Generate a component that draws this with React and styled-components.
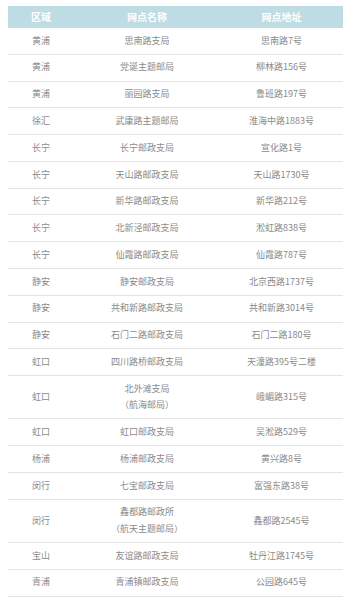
import React from 'react'
import styled, { createGlobalStyle } from 'styled-components'

const rows = [
    ['黄浦', ['思南路支局'], '思南路7号'],
    ['黄浦', ['党诞主题邮局'], '柳林路156号'],
    ['黄浦', ['丽园路支局'], '鲁班路197号'],
    ['徐汇', ['武康路主题邮局'], '淮海中路1883号'],
    ['长宁', ['长宁邮政支局'], '宣化路1号'],
    ['长宁', ['天山路邮政支局'], '天山路1730号'],
    ['长宁', ['新华路邮政支局'], '新华路212号'],
    ['长宁', ['北新泾邮政支局'], '淞虹路838号'],
    ['长宁', ['仙霞路邮政支局'], '仙霞路787号'],
    ['静安', ['静安邮政支局'], '北京西路1737号'],
    ['静安', ['共和新路邮政支局'], '共和新路3014号'],
    ['静安', ['石门二路邮政支局'], '石门二路180号'],
    ['虹口', ['四川路桥邮政支局'], '天潼路395号二楼'],
    ['虹口', ['北外滩支局', '（航海邮局）'], '峨嵋路315号'],
    ['虹口', ['虹口邮政支局'], '吴淞路529号'],
    ['杨浦', ['杨浦邮政支局'], '黄兴路8号'],
    ['闵行', ['七宝邮政支局'], '富强东路38号'],
    ['闵行', ['鑫都路邮政所', '（航天主题邮局）'], '鑫都路2545号'],
    ['宝山', ['友谊路邮政支局'], '牡丹江路1745号'],
    ['青浦', ['青浦镇邮政支局'], '公园路645号'],
]

const App = () => {
    return (
        <>
            <GlobalStyle />
            <Page>
                <Table>
                    <HeadRow>
                        <HeadCell>区域</HeadCell>
                        <HeadCell>网点名称</HeadCell>
                        <HeadCell>网点地址</HeadCell>
                    </HeadRow>
                    {rows.map(([district, names, address], i) => (
                        <Row key={i}>
                            <Cell>{district}</Cell>
                            <Cell>
                                {names.map((n) => (
                                    <Line key={n}>{n}</Line>
                                ))}
                            </Cell>
                            <Cell>{address}</Cell>
                        </Row>
                    ))}
                </Table>
            </Page>
        </>
    )
}

export default App

const GlobalStyle = createGlobalStyle`
    body {
        margin: 0;
        background: #fff;
        font-family: "Noto Sans CJK SC", "Noto Sans", sans-serif;
    }
`;

const Page = styled.div`
    padding: 6px 12px 0 8px;
`;

const Table = styled.div`
    width: 335px;
`;

const HeadRow = styled.div`
    display: grid;
    grid-template-columns: 66px 146px 1fr;
    height: 22px;
    align-items: center;
    background: #bddce3;
`;

const HeadCell = styled.div`
    text-align: center;
    color: #fff;
    font-size: 10px;
    font-weight: bold;
    line-height: 22px;
`;

const Row = styled.div`
    display: grid;
    grid-template-columns: 66px 146px 1fr;
    align-items: center;
    padding: 4.65px 0;
    border-bottom: 1px solid #e4e4e4;
`;

const Cell = styled.div`
    text-align: center;
    color: #8a8a8a;
    font-size: 9px;
    line-height: 16.5px;
`;

const Line = styled.div`
    white-space: nowrap;
`;
